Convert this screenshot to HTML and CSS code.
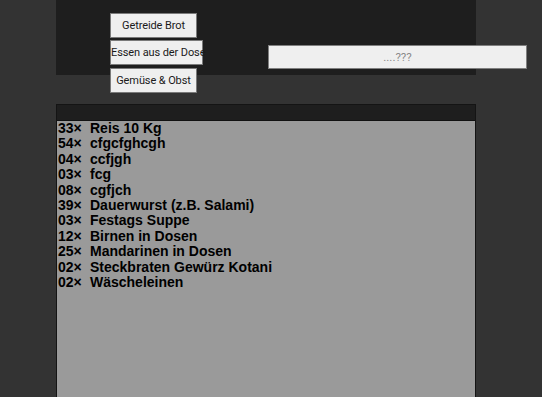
FILE: index.html
```html
<!DOCTYPE html>
<html lang="de">
<head>
<meta charset="utf-8">
<title>Vorrat</title>
<link rel="stylesheet" href="styles.css">
</head>
<body>
<div class="page">
  <div class="top">
    <div class="cats">
      <button class="cat">Getreide Brot</button>
      <button class="cat">Essen aus der Dose</button>
      <button class="cat">Gemüse &amp; Obst</button>
    </div>
    <input class="search" type="text" placeholder="....???">
  </div>
  <div class="list">
    <div class="list-head"></div>
    <div class="list-body">
      <div class="row"><span class="qty">33×</span><span>Reis 10 Kg</span></div>
      <div class="row"><span class="qty">54×</span><span>cfgcfghcgh</span></div>
      <div class="row"><span class="qty">04×</span><span>ccfjgh</span></div>
      <div class="row"><span class="qty">03×</span><span>fcg</span></div>
      <div class="row"><span class="qty">08×</span><span>cgfjch</span></div>
      <div class="row"><span class="qty">39×</span><span>Dauerwurst (z.B. Salami)</span></div>
      <div class="row"><span class="qty">03×</span><span>Festags Suppe</span></div>
      <div class="row"><span class="qty">12×</span><span>Birnen in Dosen</span></div>
      <div class="row"><span class="qty">25×</span><span>Mandarinen in Dosen</span></div>
      <div class="row"><span class="qty">02×</span><span>Steckbraten Gewürz Kotani</span></div>
      <div class="row"><span class="qty">02×</span><span>Wäscheleinen</span></div>
    </div>
  </div>
</div>
</body>
</html>
```
FILE: styles.css
```css
html, body {
  margin: 0;
  padding: 0;
  height: 100%;
  background: #333333;
  overflow: hidden;
}
.page {
  width: 420px;
  margin-left: 56px;
  display: flex;
  flex-direction: column;
  height: 100%;
}
.top {
  height: 75px;
  flex: none;
  background: #1e1e1e;
  display: flex;
  align-items: flex-start;
  overflow: visible;
}
.cats {
  margin-left: 54px;
  margin-top: 13px;
  display: flex;
  flex-direction: column;
  align-items: flex-start;
  gap: 2px;
  width: 93px;
  flex: none;
}
.cat {
  height: 25px;
  margin: 0;
  padding: 0;
  background: #efefef;
  border: 1px solid #7a7a7a;
  font-family: Roboto, "Noto Sans", sans-serif;
  font-size: 11px;
  letter-spacing: -0.1px;
  color: #1a1a1a;
  white-space: nowrap;
  text-align: center;
  overflow: visible;
}
.cat:nth-child(1) { width: 87px; }
.cat:nth-child(2) { width: 93px; }
.cat:nth-child(3) { width: 87px; margin-top: 1px; }
.search {
  margin-left: 65px;
  margin-top: 45px;
  width: 259px;
  height: 24px;
  box-sizing: border-box;
  flex: none;
  background: #efefef;
  border: 1px solid #7f7f7f;
  font-family: Roboto, "Noto Sans", sans-serif;
  font-size: 11.5px;
  text-align: center;
  padding: 0;
}
.search::placeholder {
  color: #8a8a8a;
}
.list {
  margin-top: 29px;
  flex: 1;
  border: 1px solid #141414;
  border-bottom: none;
  display: flex;
  flex-direction: column;
}
.list-head {
  height: 15px;
  background: #1e1e1e;
  border-bottom: 1px solid #111;
}
.list-body {
  flex: 1;
  background: #9a9a9a;
  padding-left: 1px;
  font-family: "Liberation Sans", Arial, sans-serif;
  font-weight: bold;
  font-size: 14px;
  line-height: 15.4px;
  color: #000;
}
.row {
  display: flex;
}
.qty {
  width: 32px;
  flex: none;
}
```
